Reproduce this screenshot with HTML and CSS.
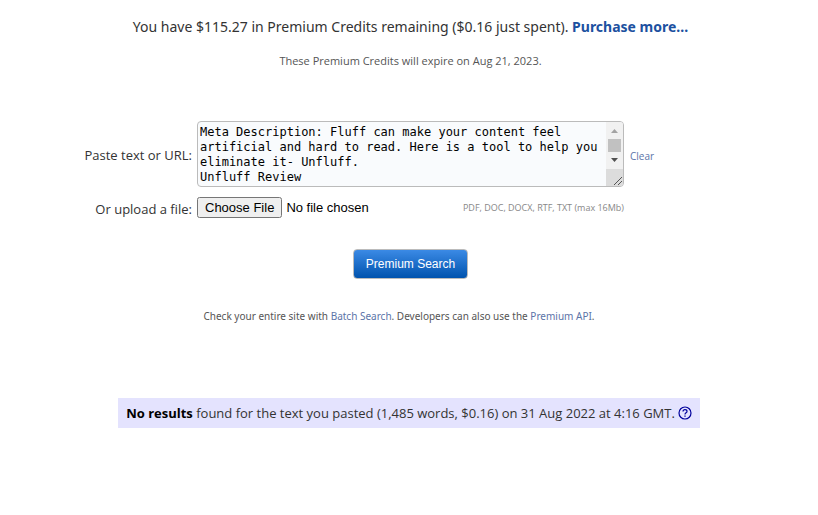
FILE: index.html
```html
<!DOCTYPE html>
<html lang="en">
<head>
  <meta charset="UTF-8">
  <meta name="viewport" content="width=device-width, initial-scale=1">
  <title>Premium Search</title>
  <link rel="stylesheet" href="styles.css">
</head>
<body>

  <header class="credits">
    <p class="balance">You have $115.27 in Premium Credits remaining ($0.16 just spent). <a href="#purchase">Purchase more...</a></p>
    <p class="expiry">These Premium Credits will expire on Aug 21, 2023.</p>
  </header>

  <form class="search">
    <div class="fields">
      <label class="field-label" for="text">Paste text or URL:</label>
      <div class="paste-box">
        <textarea class="paste" id="text" rows="4">Meta Description: Fluff can make your content feel artificial and hard to read. Here is a tool to help you eliminate it- Unfluff.
Unfluff Review</textarea>
        <div class="scrollbar" aria-hidden="true">
          <svg width="7" height="4" viewBox="0 0 7 4"><path d="M0 4L3.5 0 7 4z" fill="#a3a3a3"/></svg>
          <span class="thumb"></span>
          <svg width="7" height="4" viewBox="0 0 7 4"><path d="M0 0L3.5 4 7 0z" fill="#505050"/></svg>
        </div>
      </div>
      <a class="clear" href="#clear">Clear</a>

      <label class="field-label" for="file">Or upload a file:</label>
      <div class="upload">
        <input class="file" id="file" type="file">
        <span class="formats">PDF, DOC, DOCX, RTF, TXT (max 16Mb)</span>
      </div>
    </div>
    <button class="submit" type="submit">Premium Search</button>
  </form>

  <p class="more">Check your entire site with <a href="#batch">Batch Search</a>. Developers can also use the <a href="#api">Premium API</a>.</p>

  <div class="result">
    <p><b>No results</b> found for the text you pasted (1,485 words, $0.16) on 31 Aug 2022 at 4:16 GMT.</p>
    <a class="help" href="#help" aria-label="Help">
      <svg width="14" height="14" viewBox="0 0 14 14" fill="none" stroke="currentColor">
        <circle cx="7" cy="7" r="6" stroke-width="1.2"/>
        <path d="M5 5.6C5 4.3 5.8 3.6 7 3.6s2 .7 2 1.8c0 1.3-2 1.5-2 3" stroke-width="1.2"/>
        <path d="M7 9.4v1.3" stroke-width="1.3"/>
      </svg>
    </a>
  </div>

</body>
</html>
```
FILE: styles.css
```css
body {
  margin: 0;
  padding: 16px 0 24px;
  background-color: #fff;
  color: #333;
  font-family: "Open Sans", sans-serif;
  font-size: 13px;
}
p {
  margin: 0;
}
a {
  color: #5b74a8;
  text-decoration: none;
}

.credits {
  padding: 0 3px 0 6px;
  text-align: center;
}
.balance {
  font-family: "Noto Sans", sans-serif;
  font-size: 14px;
  line-height: 22px;
}
.balance a {
  color: #1c51a0;
  font-weight: bold;
}
.expiry {
  margin-top: 14px;
  color: #555;
  font-size: 11px;
  line-height: 18px;
}

.search {
  display: flex;
  flex-direction: column;
  align-items: center;
  margin-top: 51px;
  padding-left: 3px;
}
.fields {
  display: grid;
  grid-template-columns: 192px 427px 192px;
  align-items: center;
  column-gap: 5px;
  row-gap: 10px;
}
.field-label {
  padding-top: 2px;
  text-align: right;
}
.paste-box {
  position: relative;
  display: flex;
}
.paste {
  box-sizing: border-box;
  width: 100%;
  height: 66px;
  margin: 0;
  padding: 3px 18px 0 2px;
  border: 1px solid #bbb;
  border-radius: 4px;
  background-color: #f9fbfd;
  color: #000;
  font-family: "DejaVu Sans Mono", monospace;
  font-size: 12px;
  line-height: 15px;
  overflow: hidden;
}
.paste::-webkit-resizer {
  background-color: transparent;
}
/* always-visible scrollbar, drawn over the right edge of the textarea */
.scrollbar {
  position: absolute;
  top: 1px;
  right: 1px;
  bottom: 1px;
  box-sizing: border-box;
  display: flex;
  flex-direction: column;
  align-items: center;
  gap: 6px;
  width: 17px;
  padding-top: 7px;
  border-radius: 0 3px 3px 0;
  background: #f1f1f1 url("data:image/svg+xml,%3Csvg xmlns='http://www.w3.org/2000/svg' width='17' height='17'%3E%3Cpath fill='%23dcdcdc' d='M0 0h17v17H0z'/%3E%3Cpath d='M8 16l8-8M12 16l4-4' stroke='%23555' fill='none'/%3E%3C/svg%3E") bottom no-repeat;
  pointer-events: none;
}
.thumb {
  width: 13px;
  height: 13px;
  background-color: #c1c1c1;
}
.clear {
  padding: 4px 0 0 1px;
  font-size: 10px;
}
.upload {
  display: flex;
  align-items: center;
  justify-content: space-between;
}
.file {
  width: 200px;
  color: #000;
  font-family: "Liberation Sans", Arial, sans-serif;
  font-size: 13px;
}
.formats {
  color: #888;
  font-size: 9px;
}
.submit {
  height: 30px;
  margin-top: 31px;
  padding: 0 12px;
  border: 1px solid #bbb;
  border-radius: 4px;
  background: linear-gradient(#3b8ae5, #0053ae);
  color: #fff;
  font-family: "Liberation Sans", Arial, sans-serif;
  font-size: 12px;
}

.more {
  margin-top: 28px;
  padding-right: 20px;
  color: #555;
  font-family: "Noto Sans", sans-serif;
  font-size: 10px;
  line-height: 18px;
  text-align: center;
}

.result {
  display: flex;
  align-items: center;
  justify-content: center;
  gap: 3px;
  width: fit-content;
  margin: 73px auto 0;
  padding: 6px 8px;
  background-color: #e4e3fe;
  line-height: 18px;
}
.result b {
  color: #000;
}
.help {
  display: flex;
  color: #00009c;
}
```
